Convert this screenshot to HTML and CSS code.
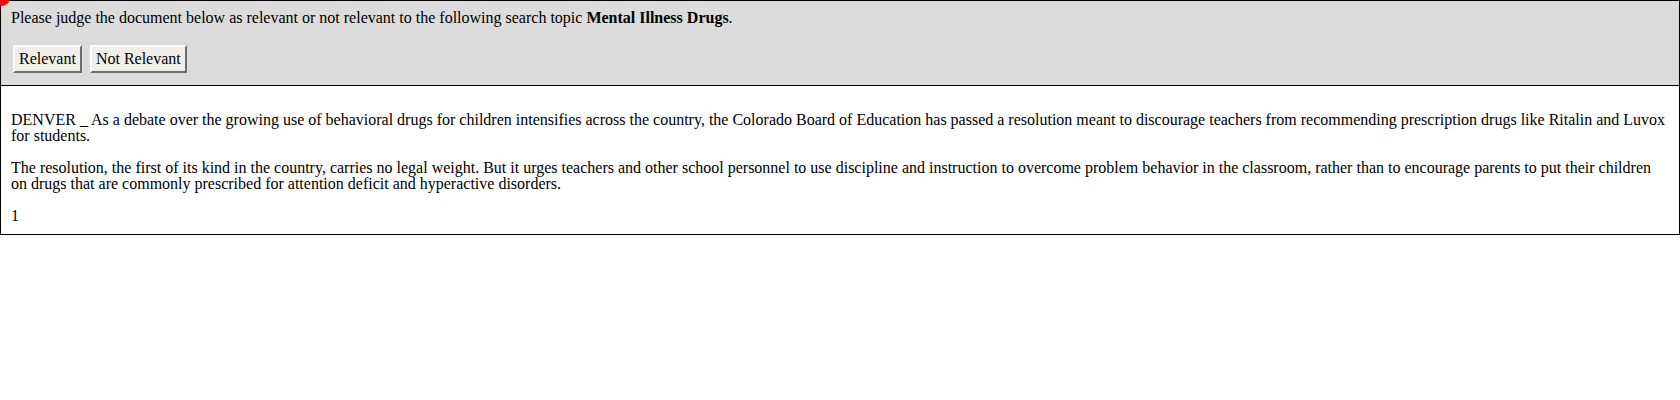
FILE: index.html
```html
<!DOCTYPE html>
<html>
<head>
<meta charset="utf-8">
<link rel="stylesheet" href="styles.css">
</head>
<body>
<div class="dot"></div>
<div class="judge">
  <div class="prompt">Please judge the document below as relevant or not relevant to the following search topic <b>Mental Illness Drugs</b>.</div>
  <div class="actions">
    <button class="btn">Relevant</button>
    <button class="btn">Not Relevant</button>
  </div>
</div>
<div class="doc">
  <p>DENVER _ As a debate over the growing use of behavioral drugs for children intensifies across the country, the Colorado Board of Education has passed a resolution meant to discourage teachers from recommending prescription drugs like Ritalin and Luvox for students.</p>
  <p>The resolution, the first of its kind in the country, carries no legal weight. But it urges teachers and other school personnel to use discipline and instruction to overcome problem behavior in the classroom, rather than to encourage parents to put their children on drugs that are commonly prescribed for attention deficit and hyperactive disorders.</p>
  <p>1</p>
</div>
</body>
</html>
```
FILE: styles.css
```css
html, body {
  margin: 0;
  padding: 0;
  background: #fff;
}
body {
  font-family: "Liberation Serif", "Times New Roman", serif;
  font-size: 16px;
  line-height: 16px;
  color: #000;
}
.dot {
  position: absolute;
  left: -7px;
  top: -11px;
  width: 17px;
  height: 17px;
  border-radius: 50%;
  background: #f00;
}
.judge {
  background: #dcdcdc;
  border: 1px solid #000;
  padding: 9px 10px 0 10px;
  height: 75px;
}
.prompt {
  line-height: 16px;
}
.actions {
  display: flex;
  gap: 8px;
  margin-top: 19px;
  padding-left: 2px;
}
.btn {
  font-family: "Liberation Serif", "Times New Roman", serif;
  font-size: 16px;
  line-height: 18px;
  height: 28px;
  padding: 0 4px;
  background: #f0eee9;
  color: #000;
  border: 2px solid;
  border-color: #fafafa #6e6e6e #6e6e6e #fafafa;
  border-radius: 0;
}
.doc {
  border: 1px solid #000;
  border-top: none;
  padding: 10px 10px 10px 10px;
}
.doc p {
  margin: 16px 0;
}
.doc p:last-child {
  margin-bottom: 0;
}
```
